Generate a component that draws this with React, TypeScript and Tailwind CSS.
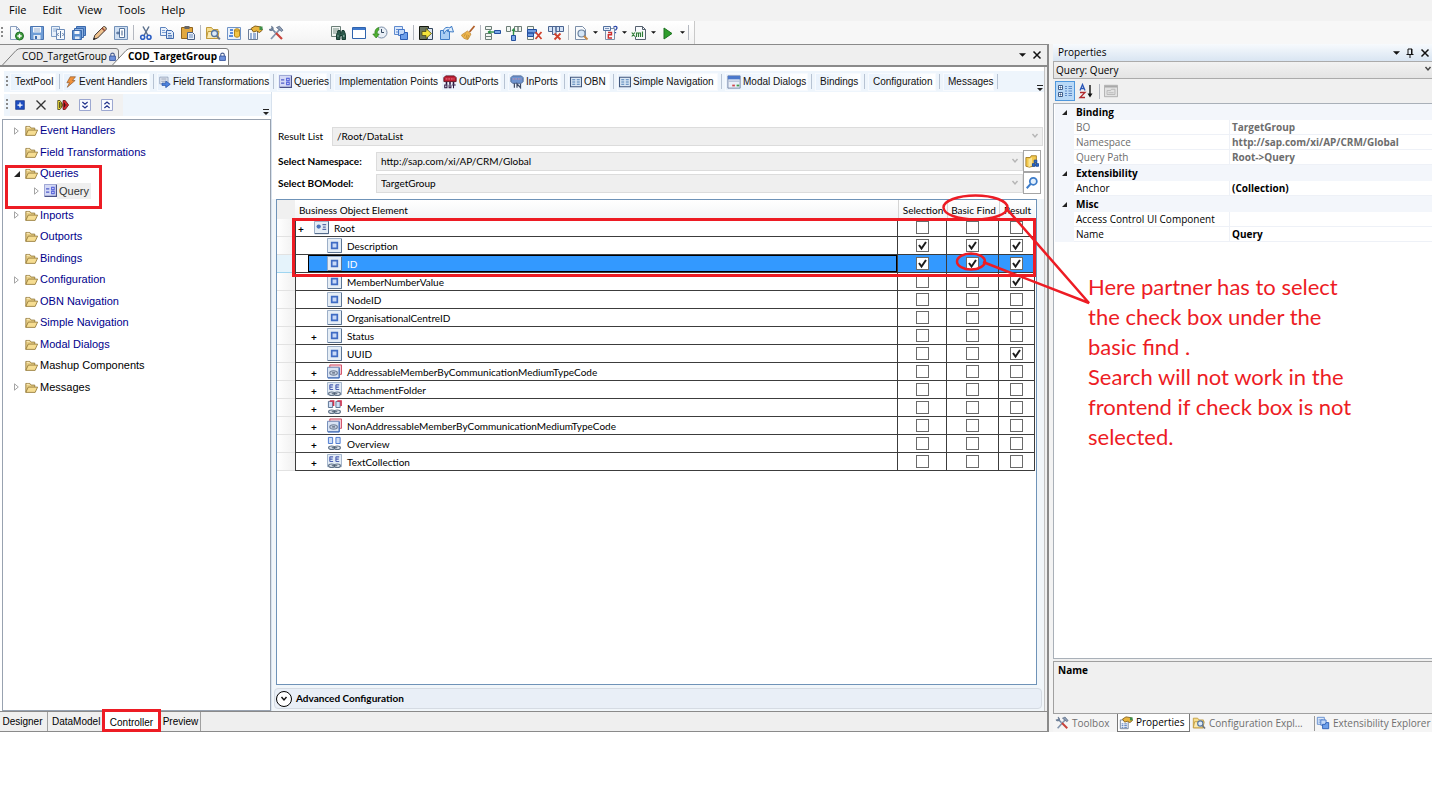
import type { ReactNode } from 'react'

const UI = "font-['Open_Sans','Noto_Sans',sans-serif]"
const LATO = "font-['Lato','Open_Sans',sans-serif]"
const ARIAL = "font-['Liberation_Sans',Arial,sans-serif]"

/* ---------- icons ---------- */

function Icon({ children, className = 'w-4 h-4' }: { children: ReactNode; className?: string }) {
  return (
    <svg viewBox="0 0 16 16" className={`shrink-0 ${className}`} fill="none" aria-hidden="true">
      {children}
    </svg>
  )
}

const NewIcon = () => (
  <Icon>
    <path d="M2.500 1.500h6l3 3v10h-9z" fill="#f6f9fd" stroke="#8b9fbe" />
    <path d="M8.500 1.500v3h3" stroke="#8b9fbe" />
    <circle cx="11.500" cy="11" r="4" fill="#3f9a3c" stroke="#1f6e26" />
    <path d="M11.500 8.800v4.400M9.300 11h4.400" stroke="#fff" strokeWidth="1.400" />
  </Icon>
)
const SaveIcon = () => (
  <Icon>
    <path d="M1.500 1.500h13v13h-13z" fill="#6f9dd6" stroke="#4a74b0" />
    <path d="M4 2h8v5.500H4z" fill="#f3f7fc" />
    <path d="M5 4h6M5 6h6" stroke="#9fb4d2" />
    <path d="M4.500 10h7v4.500h-7z" fill="#e4ebf5" />
    <path d="M6 11h2v3H6z" fill="#3a69ac" />
  </Icon>
)
const SheetsIcon = () => (
  <Icon>
    <path d="M1.500 1.500h8v10h-8z" fill="#e8f0fa" stroke="#7d9cc4" />
    <path d="M3 4h5M3 6h5" stroke="#8faed4" />
    <path d="M6.500 4.500h8v10h-8z" fill="#f5f9fd" stroke="#6b8bb8" />
    <path d="M10.500 6v7M8.500 8l-1 1.500 1 1.500M12.500 8l1 1.500-1 1.500" stroke="#54749f" />
  </Icon>
)
const SaveAllIcon = () => (
  <Icon>
    <path d="M5.500 1.500h9v9h-9z" fill="#6d9bd8" stroke="#3a69ac" />
    <path d="M3.500 3.500h9v9h-9z" fill="#8fb4e4" stroke="#3a69ac" />
    <path d="M1.500 5.500h9v9h-9z" fill="#5b8fd0" stroke="#3a69ac" />
    <path d="M3.500 6h5v3h-5z" fill="#f3f7fc" />
    <path d="M4 11.500h4.500V14H4z" fill="#dfe8f4" />
  </Icon>
)
const PencilIcon = () => (
  <Icon>
    <path d="M1.500 14.500l1.300-4.200L11.500 1.600c1.400-.5 3 1 2.800 2.600L5.600 13z" fill="#efc28d" stroke="#3f3430" />
    <path d="M10 3l3 3" stroke="#9a4a3a" strokeWidth="1.500" />
    <path d="M1.200 15l.8-2.600 1.900 1.700z" fill="#222" />
  </Icon>
)
const FrameIcon = () => (
  <Icon>
    <path d="M1.500 1.500h13v13h-13z" fill="#cfdff2" stroke="#7391b8" />
    <path d="M6.500 3.500h5v9h-5z" fill="#fff" stroke="#54749f" />
    <path d="M9 5.500v5M3 8h4M5 6.500v3" stroke="#3f5f8c" />
  </Icon>
)
const CutIcon = () => (
  <Icon>
    <path d="M5 1.500l5 9M11 1.500l-5 9" stroke="#5a6f8c" strokeWidth="1.500" />
    <circle cx="4.700" cy="12.300" r="2" stroke="#2c5fc4" strokeWidth="1.600" />
    <circle cx="11" cy="12.300" r="2" stroke="#2c5fc4" strokeWidth="1.600" />
  </Icon>
)
const CopyIcon = () => (
  <Icon>
    <path d="M1.500 2.500h5l2 2v6h-7z" fill="#eaf1fb" stroke="#5d83bd" />
    <path d="M3 5.500h3M3 7.500h4" stroke="#7ea2d6" />
    <path d="M7.500 5.500h5l2 2v6h-7z" fill="#dde9f8" stroke="#3f69ac" />
    <path d="M9 8.500h3M9 10.500h4M9 12h4" stroke="#5d83bd" />
  </Icon>
)
const PasteIcon = () => (
  <Icon>
    <path d="M1.500 2.500h11v11h-11z" fill="#e2a83f" stroke="#8f6420" />
    <path d="M4.500 1h5v3h-5z" fill="#666" />
    <path d="M7.500 7.500h5l2 2v5h-7z" fill="#e7effa" stroke="#4a5f82" />
    <path d="M9 10h4M9 12h4" stroke="#6c8cbb" />
  </Icon>
)
const FolderSearchIcon = ({ className }: { className?: string }) => (
  <Icon className={className}>
    <path d="M1.500 13.500v-11h5l1.500 2h5v9z" fill="#f6dd8c" stroke="#c09a3c" />
    <path d="M3 6.500h11l-1.500 7h-11z" fill="#fbeab0" stroke="#c09a3c" />
    <circle cx="9.500" cy="8.500" r="3" fill="#dcebfa" stroke="#55759f" strokeWidth="1.300" />
    <path d="M11.800 10.800l3 3.500" stroke="#6d7682" strokeWidth="2" />
  </Icon>
)
const DbViewIcon = () => (
  <Icon>
    <path d="M1.500 2.500h13v12h-13z" fill="#eaf2fb" stroke="#6f93c6" />
    <path d="M4 5h3M4 8h3M3 11h4" stroke="#2c6bd0" strokeWidth="1.500" />
    <path d="M8.500 5c0-1.600 5-1.600 5 0v6c0 1.600-5 1.600-5 0z" fill="#f3c544" stroke="#b58720" />
    <path d="M8.500 5c0 1.500 5 1.500 5 0" stroke="#b58720" />
  </Icon>
)
const PropsIcon = ({ className }: { className?: string }) => (
  <Icon className={className}>
    <path d="M1.500 4.500h9v10h-9z" fill="#f7f9fc" stroke="#6c7c94" />
    <path d="M3 9h2M3 11h2M3 13h2M6 9h3M6 11h3M6 13h3" stroke="#3f6cb4" />
    <path d="M4 3.500l4-2.500 6 1 1.500 3-3 2.500-3-1.500-3 1z" fill="#e9b53d" stroke="#84601a" />
    <path d="M12.500 1.500h3v3.500h-3z" fill="#3f8f4a" />
  </Icon>
)
const ToolsIcon = ({ className }: { className?: string }) => (
  <Icon className={className}>
    <path d="M4 4l3.500 3.700" stroke="#7488a3" strokeWidth="1.800" />
    <path d="M12 4L3 14" stroke="#8496ae" strokeWidth="1.800" />
    <path d="M8 8l6 6" stroke="#c8433b" strokeWidth="2.200" />
    <path d="M1 4.500c1 1.500 3 1.500 3.800.3C5.800 3.500 5 1.700 3.500 1.300L4 3 2.800 4z" fill="#7488a3" stroke="#54657e" strokeWidth=".7" />
    <path d="M8.500 2.500l3-1.300 3.500 4-1.500 1.300z" fill="#8c9db5" stroke="#4d5d78" strokeWidth=".7" />
  </Icon>
)
const FindIcon = () => (
  <Icon>
    <path d="M1.500 1.500h9v10h-9z" fill="#f2f6f3" stroke="#6b7f78" />
    <path d="M3 4h6M3 6h5M3 8h3" stroke="#7b9188" />
    <path d="M6.500 14.500v-5l1.500-4h2l.5 3h1l.5-3h2l1.500 4v5h-3.500v-4h-2v4z" fill="#2d5a4c" stroke="#173c31" />
    <path d="M7.500 11h1M13 11h1.500" stroke="#bfe0d1" />
  </Icon>
)
const WindowIcon = () => (
  <Icon>
    <path d="M1.500 2.500h13v11h-13z" fill="#fff" stroke="#2f63ad" />
    <path d="M2 3h12v2H2z" fill="#3d78cc" />
  </Icon>
)
const HistoryIcon = () => (
  <Icon>
    <circle cx="9.500" cy="7.500" r="5.500" fill="#e8eef5" stroke="#7b8ea8" />
    <path d="M9.500 4v3.500H12" stroke="#33475f" />
    <path d="M6.500 2.500C3.500 3.500 2.500 6 3 9H.8l3.400 4 3-4H5.300C5 7 5.500 5.500 7 4.700z" fill="#4fb131" stroke="#2e7c1c" strokeWidth=".7" />
  </Icon>
)
const ExtIcon = ({ className }: { className?: string }) => (
  <Icon className={className}>
    <path d="M1.500 1.500h8v8h-8z" fill="#dbe8fa" stroke="#5f8ace" />
    <path d="M3 4.500h5M3 7h3" stroke="#5f8ace" />
    <path d="M5.500 4.500h6v6h-6z" fill="#c3d9f8" stroke="#4677c8" />
    <path d="M7.500 9.500h3l1-2h3v7h-7z" fill="#6d9fea" stroke="#2b5db4" />
  </Icon>
)
const GoIcon = () => (
  <Icon>
    <path d="M1.500 1.500h9v13h-9z" fill="#6a7560" stroke="#14180f" />
    <path d="M9.500 3.500h5v11h-5z" fill="#dfe6ee" stroke="#33475f" />
    <path d="M4 6.500h4v-3l5.500 5-5.500 5v-3H4z" fill="#f4e43c" stroke="#4d4a10" strokeWidth=".8" />
  </Icon>
)
const ShareIcon = () => (
  <Icon>
    <path d="M1.500 5.500h9v9h-9z" fill="#a9cdf3" stroke="#3f7cc6" />
    <path d="M5 9c-2-5 2-8 6-6l1.500-2 2 6-6-.5L10 4.800C8 4.300 6 6 5 9z" fill="#e1effc" stroke="#3f7cc6" />
  </Icon>
)
const BroomIcon = () => (
  <Icon>
    <path d="M14.500 1l-5 6" stroke="#b0602a" strokeWidth="1.800" />
    <path d="M7.500 6l3.500 3-3 5.500c-3-.3-5.500-1.500-6.500-4.500z" fill="#efb64c" stroke="#c08c38" strokeWidth=".8" />
    <path d="M5.500 8.500L4 11.500M7 9.500l-1 4M8.500 10l-1 4" stroke="#c9953a" />
  </Icon>
)
const RowAddIcon = () => (
  <Icon>
    <path d="M.5 1.500h6v3h-6zM.5 8.500h6v3h-6zM.5 11.500h6v3h-6z" fill="#f2f6f2" stroke="#6c7d77" />
    <path d="M9.500 5.500h6v3h-6z" fill="#7aa6e6" stroke="#234f9e" />
    <path d="M9 7H3" stroke="#2f9148" strokeWidth="1.400" />
    <path d="M5.500 4.800L2.500 7l3 2.200z" fill="#2f9148" />
  </Icon>
)
const ColAddIcon = () => (
  <Icon>
    <path d="M.5 1.500h4v5h-4zM8.500 1.500H12v5H8.500zM12 1.500h3.500v5H12z" fill="#f2f6f2" stroke="#6c7d77" />
    <path d="M5.500 10.500h4v5h-4z" fill="#7aa6e6" stroke="#234f9e" />
    <path d="M7.500 10V4" stroke="#2f9148" strokeWidth="1.400" />
    <path d="M5.500 6l2-3 2 3z" fill="#2f9148" />
  </Icon>
)
const RowDelIcon = () => (
  <Icon>
    <path d="M.5 1.500h6v3h-6zM.5 11.500h6v3h-6z" fill="#f2f6f2" stroke="#6c7d77" />
    <path d="M.5 4.500h9v3.500h-9zM.5 8h6v3.500h-6z" fill="#6d9be0" stroke="#234f9e" />
    <path d="M8.500 7l6 7M14.500 7l-6 7" stroke="#d0412c" strokeWidth="1.800" />
  </Icon>
)
const ColDelIcon = () => (
  <Icon>
    <path d="M.5 1.500h4v5h-4zM4.500 1.500H8v8H4.500zM8 1.500h3.500v5H8zM11.500 1.500h4v5h-4z" fill="#d5e3f6" stroke="#4a6491" />
    <path d="M6.500 8.500l6 6M12.500 8.500l-6 6" stroke="#d0412c" strokeWidth="1.800" />
  </Icon>
)
const PreviewIcon = () => (
  <Icon>
    <path d="M2.500 1.500h7l3 3v10h-10z" fill="#f8fafc" stroke="#7b8ea8" />
    <circle cx="8.500" cy="8.500" r="3.500" fill="#d5e6f6" stroke="#6c839f" strokeWidth="1.200" />
    <path d="M11 11l3.500 3.500" stroke="#c78945" strokeWidth="2" />
  </Icon>
)
const HelpDocIcon = () => (
  <Icon>
    <path d="M3.500 3.500h9v11h-9z" fill="#f6f8fb" stroke="#7b8ea8" />
    <path d="M1.500 1.500h7v4h-7z" fill="#e6edf8" stroke="#52719f" />
    <path d="M3 3.500h4" stroke="#7b93bb" />
    <path d="M6 7.500h3.500v2.300H6.300v3.200H10" stroke="#cf2f2f" strokeWidth="1.400" />
    <path d="M11.500 2.500c.5-1.500 3.500-1.500 3.500.3 0 1.400-1.500 1.300-1.500 2.700M13.500 7v1.300" stroke="#2b46a8" strokeWidth="1.300" />
  </Icon>
)
const XmlIcon = () => (
  <Icon>
    <path d="M4.500 1.500h7l3 3v10h-10z" fill="#f8fafc" stroke="#55606e" />
    <path d="M11.500 1.500v3h3" stroke="#55606e" />
    <path d="M.5 6.500h12v5H.5z" fill="#f2f8f2" />
    <path d="M.8 7.500l3 4M3.800 7.500l-3 4M5.500 12V8h4v4M7.500 8v4M11.500 6.500V12" stroke="#2d7a36" strokeWidth="1.100" />
  </Icon>
)
const RunIcon = () => (
  <Icon>
    <path d="M4 3v11l8-5.500z" fill="#2f9d2c" stroke="#1d7320" />
  </Icon>
)
const BoltIcon = () => (
  <Icon className="w-3 h-3">
    <path d="M7 1h7l-4 5h3.500L3 15l3-6H2.500z" fill="#f0913a" stroke="#7e4a20" strokeWidth=".8" />
  </Icon>
)
const FieldIcon = () => (
  <Icon className="w-3 h-3">
    <path d="M1 1.500h11v9H1z" fill="#e7ecf4" stroke="#8797b2" />
    <path d="M3 4h7M3 7h5" stroke="#7c8aa3" />
    <path d="M4 9.500h5v-3l6 4.500-6 4.500v-3H4z" fill="#4d84e0" stroke="#234fa3" />
  </Icon>
)
const QueryIcon = () => (
  <Icon className="w-[13px] h-[13px]">
    <path d="M.5.500h15v15H.5z" fill="#d5daf6" stroke="#8a93c8" />
    <path d="M15.300 1v14.300H1" stroke="#4a5288" strokeWidth="1.400" />
    <path d="M2.500 6h4M2.500 10h4" stroke="#4f5cc8" strokeWidth="1.500" />
    <path d="M9.500 4h3v3h-3zM9.500 9h3v3h-3z" fill="#eef0ff" stroke="#4453d6" strokeWidth="1.300" />
  </Icon>
)
const OutPortIcon = () => (
  <Icon className="w-3.5 h-3.5">
    <path d="M1 3l2-2h10l2 2v4.500H1z" fill="#c01f36" stroke="#5a0d18" />
    <path d="M3 4.500h10" stroke="#f08a95" strokeDasharray="2 1" />
    <path d="M4 8v3M8 8v3M12 8v3" stroke="#2a1440" strokeWidth="1.800" />
    <path d="M2 11.500h2.500v3H2zM7 11v4M6.500 14.500H9V11M12 11v4M10.500 11.500h4" stroke="#2a1440" strokeWidth="1.200" />
  </Icon>
)
const InPortIcon = () => (
  <Icon className="w-3.5 h-3.5">
    <path d="M1 3l2-2h10l2 2v4.500l-2 2H3L1 7.500z" fill="#6c93cf" stroke="#44608f" />
    <path d="M3 4.500h10" stroke="#dc8fa0" strokeDasharray="2 1" />
    <path d="M5 9.500v5M8 14.500v-4.500l4 4.500v-4.500" stroke="#3c4a66" strokeWidth="1.400" />
  </Icon>
)
const ObnIcon = () => (
  <Icon className="w-3 h-3">
    <path d="M.7 1.700h14.600v12.600H.7z" fill="#dbe8f5" stroke="#41577d" strokeWidth="1.400" />
    <path d="M3 5h4M3 8h4M3 11h4M9 5h4M9 8h4M9 11h4" stroke="#4f7fb6" strokeWidth="1.600" />
  </Icon>
)
const ModalIcon = () => (
  <Icon className="w-3.5 h-3.5">
    <path d="M1 1h14v14H1z" fill="#e9eff8" stroke="#6d7ea0" />
    <path d="M1 1h14v4H1z" fill="#4b78cb" />
    <path d="M2 7h12" stroke="#96a7c6" />
    <path d="M6 11h3v2H6z" fill="#d0434a" />
    <path d="M11 11h3v2h-3z" fill="#3e9a4c" />
  </Icon>
)
const FolderIcon = () => (
  <Icon className="w-[13px] h-[13px]">
    <path d="M1 14V3h5l1.500 2H12v3" fill="#e9cf86" stroke="#8f7434" />
    <path d="M1 14L4 7.500h11.500L12.500 14z" fill="#f6dd92" stroke="#8f7434" />
    <path d="M2 4h3.500" stroke="#fff7d8" />
  </Icon>
)
const AttrIcon = () => (
  <Icon className="w-[15px] h-[15px]">
    <path d="M.5.500h15v15H.5z" fill="#e6eef6" stroke="#93a8c2" />
    <path d="M15.500 1v14.500H1" stroke="#57708f" />
    <path d="M5 5h6v6H5z" fill="#c8d9f8" stroke="#3f6cc4" strokeWidth="1.800" />
  </Icon>
)
const NodeIcon = () => (
  <Icon className="w-[15px] h-[15px]">
    <path d="M.5 1.500h15v13H.5z" fill="#e6eef6" stroke="#93a8c2" />
    <path d="M15.500 1.500v13H1" stroke="#475f80" />
    <circle cx="5" cy="7" r="2.300" fill="#4a74bb" />
    <path d="M9 5h4M9.500 7.500h3M9 10h4" stroke="#5a6da8" strokeWidth="1.400" />
  </Icon>
)
const TypeCodeIcon = () => (
  <Icon className="w-[15px] h-[15px]">
    <path d="M3 1h12.500v10H3z" fill="#f6ccd4" stroke="#d0485f" />
    <path d="M.5 3.500h12.500v11H.5z" fill="#d9e4f4" stroke="#6d86b4" />
    <path d="M13 4v11H1" stroke="#2f62bb" />
    <ellipse cx="7" cy="9.500" rx="4" ry="2.300" fill="#c3cede" stroke="#74839a" strokeWidth="1.300" />
    <path d="M5.500 9.500h3" stroke="#34435c" />
  </Icon>
)
const LinkPairIcon = ({ boxed = false, red = false }: { boxed?: boolean; red?: boolean }) => (
  <Icon className="w-[15px] h-[15px]">
    {boxed && <path d="M.5.500h15v13H.5z" fill="#e3ecf6" stroke="#9fb1c8" />}
    {boxed ? (
      <path d="M3 3h3.500M3 5.500h3M3 8h3.500M3 3v5M9.500 3H13M9.500 5.500h3M9.500 8H13M9.500 3v5" stroke="#4c60b2" strokeWidth="1.200" />
    ) : (
      <path d="M1.500 1.500H6V8H1.500zM9.500 1.500H14V8H9.500z" fill="#cfdff6" stroke={red ? '#57708f' : '#4a78cf'} />
    )}
    {red && <path d="M3 1h4v5.500M11 1h4v5.500" stroke="#d0324f" strokeWidth="1.700" />}
    <ellipse cx="5" cy="12.500" rx="3.300" ry="1.900" fill="#dce4ed" stroke="#5f7187" strokeWidth="1.200" />
    <ellipse cx="11" cy="12.500" rx="3.300" ry="1.900" fill="#dce4ed" stroke="#5f7187" strokeWidth="1.200" />
    <path d="M5 12.500h6" stroke="#46566c" />
  </Icon>
)
const LockIcon = () => (
  <svg viewBox="0 0 8 10" className="w-[7px] h-[9px] shrink-0" fill="none" aria-hidden="true">
    <path d="M2 5V3c0-2.500 4-2.500 4 0v2" stroke="#4a5f92" strokeWidth="1.200" />
    <path d="M.7 4.500h6.600v5H.7z" fill="#6f92dc" stroke="#33529a" />
  </svg>
)
const Caret = ({ className = 'w-[7px] h-1' }: { className?: string }) => (
  <svg viewBox="0 0 8 4" className={`shrink-0 ${className}`} aria-hidden="true">
    <path d="M0 0h8L4 4z" fill="#111" />
  </svg>
)
const Chevron = ({ color = '#b5b5b5' }: { color?: string }) => (
  <svg viewBox="0 0 8 6" className="w-2 h-1.5" fill="none" aria-hidden="true">
    <path d="M1.500 1L4 4l2.500-3" stroke={color} strokeWidth="1.400" />
  </svg>
)
const CrossIcon = () => (
  <svg viewBox="0 0 10 10" className="w-2.5 h-2.5" fill="none" aria-hidden="true">
    <path d="M1.500 1.500l7 7M8.500 1.500l-7 7" stroke="#111" strokeWidth="1.500" />
  </svg>
)
const OverflowIcon = () => (
  <svg viewBox="0 0 6 6" className="w-1.5 h-1.5" aria-hidden="true">
    <path d="M0 0h6v1H0zM0 3h6L3 6z" fill="#222" />
  </svg>
)
const ClosedIcon = () => (
  <svg viewBox="0 0 5 8" className="w-[5px] h-2" fill="none" aria-hidden="true">
    <path d="M.5.8v6.400L4.300 4z" stroke="#a5a5a5" />
  </svg>
)
const OpenIcon = () => (
  <svg viewBox="0 0 7 7" className="w-1.5 h-1.5" aria-hidden="true">
    <path d="M7 0v7H0z" fill="#222" />
  </svg>
)

function Grip() {
  return (
    <svg viewBox="0 0 2 14" className="w-0.5 h-3.5 shrink-0" aria-hidden="true">
      <path d="M1 1v12" stroke="#8a8a8a" strokeWidth="2" strokeDasharray="2 2" />
    </svg>
  )
}

function Sep() {
  return <span className="w-1 shrink-0 flex justify-center"><span className="w-px h-[15px] bg-[#b4b8c0]" /></span>
}

/* ---------- data ---------- */

type Tool = { label: string; icon: () => ReactNode; menu?: boolean }

const toolGroups: Tool[][] = [
  [
    { label: 'New', icon: NewIcon },
    { label: 'Save', icon: SaveIcon },
    { label: 'Save as', icon: SheetsIcon },
    { label: 'Save all', icon: SaveAllIcon },
    { label: 'Edit', icon: PencilIcon },
    { label: 'Fit', icon: FrameIcon },
  ],
  [
    { label: 'Cut', icon: CutIcon },
    { label: 'Copy', icon: CopyIcon },
    { label: 'Paste', icon: PasteIcon },
  ],
  [
    { label: 'Configuration Explorer', icon: FolderSearchIcon },
    { label: 'Data', icon: DbViewIcon },
    { label: 'Properties', icon: PropsIcon },
    { label: 'Toolbox', icon: ToolsIcon },
  ],
]

const toolGroupsRight: Tool[][] = [
  [
    { label: 'Find', icon: FindIcon },
    { label: 'Window', icon: WindowIcon },
    { label: 'History', icon: HistoryIcon },
    { label: 'Extensibility', icon: ExtIcon },
  ],
  [
    { label: 'Activate', icon: GoIcon },
    { label: 'Share', icon: ShareIcon },
    { label: 'Clean', icon: BroomIcon },
  ],
  [
    { label: 'Insert row', icon: RowAddIcon },
    { label: 'Insert column', icon: ColAddIcon },
    { label: 'Delete row', icon: RowDelIcon },
    { label: 'Delete column', icon: ColDelIcon },
  ],
  [
    { label: 'Preview', icon: PreviewIcon, menu: true },
    { label: 'Help', icon: HelpDocIcon, menu: true },
    { label: 'XML', icon: XmlIcon, menu: true },
    { label: 'Run', icon: RunIcon, menu: true },
  ],
]

const sections: { label: string; width: string; icon?: ReactNode; noSep?: boolean }[] = [
  { label: 'TextPool', width: 'w-[46px]' },
  { label: 'Event Handlers', width: 'w-[87px]', icon: <BoltIcon /> },
  { label: 'Field Transformations', width: 'w-[113px]', icon: <FieldIcon /> },
  { label: 'Queries', width: 'w-[50px]', icon: <QueryIcon /> },
  { label: 'Implementation Points', width: 'w-[107px]', noSep: true },
  { label: 'OutPorts', width: 'w-[60px]', icon: <OutPortIcon /> },
  { label: 'InPorts', width: 'w-[53px]', icon: <InPortIcon /> },
  { label: 'OBN', width: 'w-[42px]', icon: <ObnIcon /> },
  { label: 'Simple Navigation', width: 'w-[101px]', icon: <ObnIcon /> },
  { label: 'Modal Dialogs', width: 'w-[83px]', icon: <ModalIcon /> },
  { label: 'Bindings', width: 'w-[46px]' },
  { label: 'Configuration', width: 'w-[68px]' },
  { label: 'Messages', width: 'w-[51px]' },
]

const folders: { label: string; closed?: boolean; dark?: boolean; child?: string }[] = [
  { label: 'Event Handlers', closed: true },
  { label: 'Field Transformations' },
  { label: 'Queries', child: 'Query' },
  { label: 'Inports', closed: true },
  { label: 'Outports' },
  { label: 'Bindings' },
  { label: 'Configuration', closed: true },
  { label: 'OBN Navigation' },
  { label: 'Simple Navigation' },
  { label: 'Modal Dialogs' },
  { label: 'Mashup Components', dark: true },
  { label: 'Messages', closed: true, dark: true },
]

const elements: { name: string; icon: ReactNode; plus?: boolean; root?: boolean; selected?: boolean; checks: number[] }[] = [
  { name: 'Root', icon: <NodeIcon />, plus: true, root: true, checks: [0, 0, 0] },
  { name: 'Description', icon: <AttrIcon />, checks: [1, 1, 1] },
  { name: 'ID', icon: <AttrIcon />, selected: true, checks: [1, 1, 1] },
  { name: 'MemberNumberValue', icon: <AttrIcon />, checks: [0, 0, 1] },
  { name: 'NodeID', icon: <AttrIcon />, checks: [0, 0, 0] },
  { name: 'OrganisationalCentreID', icon: <AttrIcon />, checks: [0, 0, 0] },
  { name: 'Status', icon: <AttrIcon />, plus: true, checks: [0, 0, 0] },
  { name: 'UUID', icon: <AttrIcon />, checks: [0, 0, 1] },
  { name: 'AddressableMemberByCommunicationMediumTypeCode', icon: <TypeCodeIcon />, plus: true, checks: [0, 0, 0] },
  { name: 'AttachmentFolder', icon: <LinkPairIcon boxed />, plus: true, checks: [0, 0, 0] },
  { name: 'Member', icon: <LinkPairIcon red />, plus: true, checks: [0, 0, 0] },
  { name: 'NonAddressableMemberByCommunicationMediumTypeCode', icon: <TypeCodeIcon />, plus: true, checks: [0, 0, 0] },
  { name: 'Overview', icon: <LinkPairIcon />, plus: true, checks: [0, 0, 0] },
  { name: 'TextCollection', icon: <LinkPairIcon boxed />, plus: true, checks: [0, 0, 0] },
]

const columns = ['Selection', 'Basic Find', 'Result']

const properties = [
  {
    name: 'Binding',
    muted: true,
    rows: [
      ['BO', 'TargetGroup'],
      ['Namespace', 'http://sap.com/xi/AP/CRM/Global'],
      ['Query Path', 'Root->Query'],
    ],
  },
  { name: 'Extensibility', rows: [['Anchor', '(Collection)']] },
  { name: 'Misc', rows: [['Access Control UI Component', ''], ['Name', 'Query']] },
]

/* ---------- header ---------- */

function ToolGroup({ tools }: { tools: Tool[] }) {
  return (
    <>
      {tools.map(({ label, icon: Glyph, menu }) => (
        <span key={label} className="flex items-center">
          <button type="button" aria-label={label} className="w-[21px] h-5 flex items-center justify-center">
            <Glyph />
          </button>
          {menu && (
            <button type="button" aria-label={`${label} options`} className="w-2 h-5 flex items-center justify-center">
              <Caret className="w-[5px] h-[3px]" />
            </button>
          )}
        </span>
      ))}
      <Sep />
    </>
  )
}

function Header() {
  return (
    <header>
      <nav className={`h-[21px] bg-[#f2f2f2] flex items-center gap-4 pl-[9px] text-[11px] text-black ${UI}`}>
        {['File', 'Edit', 'View', 'Tools', 'Help'].map((m) => (
          <button key={m} type="button">{m}</button>
        ))}
      </nav>
      <div className="h-[23px] bg-[#f7f7f7] flex">
        <div className="flex items-center pl-px pr-1 bg-gradient-to-b from-white to-[#f3f3f3] border-r border-[#c9c9c9]">
          <Grip />
          <span className="w-0.5" />
          {toolGroups.map((g, i) => (
            <span key={g[0].label} className="flex items-center">
              {i < 2 ? <ToolGroup tools={g} /> : g.map(({ label, icon: Glyph }) => (
                <button key={label} type="button" aria-label={label} className="w-[21px] h-5 flex items-center justify-center">
                  <Glyph />
                </button>
              ))}
            </span>
          ))}
          <span className="w-[41px]" />
          {toolGroupsRight.map((g) => <ToolGroup key={g[0].label} tools={g} />)}
        </div>
      </div>
    </header>
  )
}

function DocTab({ active }: { active?: boolean }) {
  return (
    <button
      type="button"
      className={`relative w-[117px] h-[17px] flex items-center justify-end gap-0.5 pr-[3px] text-[10px] text-black ${UI} ${
        active ? '-ml-[7px] z-10 font-bold' : ''
      }`}
    >
      <svg viewBox="0 0 117 17" preserveAspectRatio="none" className="absolute inset-0 w-full h-full" aria-hidden="true">
        <path d="M.5 17L14 2.500Q16 .5 19 .5h95q2.500 0 2.500 2.500v14" fill={active ? '#ffffff' : '#ebebeb'} stroke="#7c7c7c" />
      </svg>
      <span className="relative">COD_TargetGroup</span>
      <span className="relative"><LockIcon /></span>
    </button>
  )
}

/* ---------- left column ---------- */

function Tree() {
  return (
    <ul className={`flex-1 border border-[#98a2b0] bg-white text-[11px] text-[#00008b] ${ARIAL}`}>
      {folders.map((n) => (
        <li key={n.label} className="group relative">
          <div className="flex items-center pl-[11px] h-[21px] group-even:h-[22px]">
            <span className="w-[11px] flex">
              {n.closed && <ClosedIcon />}
              {n.child && <OpenIcon />}
            </span>
            <FolderIcon />
            <span className={`ml-0.5 ${n.dark ? 'text-black' : ''}`}>{n.label}</span>
          </div>
          {n.child && (
            <>
              <div className="flex items-center h-[13px] mb-[7px] pl-[31px] text-[#333]">
                <span className="w-[10px]"><ClosedIcon /></span>
                <QueryIcon />
                <span className="px-0.5 leading-4 bg-[#efefef]">{n.child}</span>
              </div>
              <div className="absolute left-0.5 top-0.5 w-[97px] h-11 border-[3px] border-[#ed1c24] pointer-events-none" />
            </>
          )}
        </li>
      ))}
    </ul>
  )
}

/* ---------- query editor ---------- */

function Field({ id, label, value, bold, children }: { id: string; label: string; value: string; bold?: boolean; children?: ReactNode }) {
  return (
    <div className="flex items-center h-[22px]">
      <label htmlFor={id} className={`shrink-0 ${bold ? 'w-[98px] font-bold' : 'w-[54px]'}`}>{label}</label>
      <span className="relative flex-1 flex">
        <select id={id} className="appearance-none w-full h-[19px] pl-1 bg-[#efefef] border border-[#dcdcdc] text-black">
          <option>{value}</option>
        </select>
        <span className="absolute right-1 top-[6px] pointer-events-none"><Chevron /></span>
      </span>
      {children}
    </div>
  )
}

function Check({ label, on }: { label: string; on: boolean }) {
  return (
    <span className="relative block w-[13px] h-[13px] mx-auto">
      <input
        type="checkbox"
        aria-label={label}
        defaultChecked={on}
        className="peer appearance-none block w-[13px] h-[13px] bg-white border border-[#6a6a6a]"
      />
      <svg viewBox="0 0 13 13" className="hidden peer-checked:block absolute inset-0 pointer-events-none" fill="none">
        <path d="M3 6l2.500 3.500L10 3" stroke="#1c1c1c" strokeWidth="2" />
      </svg>
    </span>
  )
}

function ElementTable() {
  return (
    <div className="relative flex-1 bg-white border border-[#6f93b8] pr-px">
      <table className="w-full table-fixed border-separate border-spacing-0 text-[10px] leading-3 text-black">
        <colgroup>
          <col className="w-[18px]" />
          <col />
          <col className="w-[49px]" />
          <col className="w-[52px]" />
          <col className="w-[36px]" />
        </colgroup>
        <thead>
          <tr className="h-[19px] bg-gradient-to-b from-white to-[#f3f4f6]">
            <td className="p-0 bg-[#f0f0f0]" />
            <th className="p-0 pl-1 text-left font-normal">Business Object Element</th>
            {columns.map((c) => (
              <th key={c} className="p-0 font-normal border-l border-[#d5d5d5] whitespace-nowrap">{c}</th>
            ))}
          </tr>
        </thead>
        <tbody>
          {elements.map((e) => (
            <tr key={e.name} className="h-[18px]">
              <td className={`p-0 border-b ${e.selected ? 'bg-[#e5f3fb] border-[#9fd5f0]' : 'bg-gradient-to-r from-white to-[#f0f0f0] border-[#e2e2e2]'}`} />
              <td className="p-0 border-l border-b border-r border-[#3c3c3c]">
                <div className="flex h-[17px]">
                  <span className="shrink-0 w-3 pt-0.5 flex items-center font-bold">
                    <span className="pl-0.5">{e.root && '+'}</span>
                  </span>
                  <div className={`flex-1 flex items-center ${e.selected ? 'bg-[#3399ff] text-white border border-black' : ''}`}>
                    {!e.root && (
                      <span className={`shrink-0 pt-0.5 pl-[3px] font-bold w-[13px] ${e.selected ? '-ml-px' : ''}`}>
                        {e.plus && '+'}
                      </span>
                    )}
                    <span className="shrink-0 flex w-[26px] pl-[6px]">{e.icon}</span>
                    <span className="whitespace-nowrap">{e.name}</span>
                  </div>
                </div>
              </td>
              {columns.map((c, i) => (
                <td key={c} className={`p-0 border-b border-r border-[#3c3c3c] ${e.selected ? 'bg-[#3399ff]' : ''}`}>
                  <Check label={`${e.name} ${c}`} on={e.checks[i] === 1} />
                </td>
              ))}
            </tr>
          ))}
        </tbody>
      </table>
      <div className="absolute left-[15px] right-0 top-[18px] h-[59px] border-[3px] border-[#ed1c24] pointer-events-none" />
    </div>
  )
}

function Editor() {
  return (
    <section className={`flex-1 flex flex-col bg-[#f1f6fa] text-[10px] text-black ${LATO}`}>
      <div className="bg-white pt-[33px] pb-[5px] pl-1.5 pr-px">
        <Field id="result" label="Result List" value="/Root/DataList" />
        <div className="pt-[3px] pr-0.5">
          <Field id="ns" label="Select Namespace:" value="http://sap.com/xi/AP/CRM/Global" bold>
            <button type="button" aria-label="Open namespace" className="w-[18px] h-[22px] bg-white border border-[#a5a5a5] flex items-center justify-center">
              <Icon className="w-3.5 h-3.5">
                <path d="M1 4h5l1-2h6v11l-8 2-4-1z" fill="#f3c94d" stroke="#a57a1e" />
                <path d="M4 6l4-2v9l-4 2z" fill="#fbe595" />
                <path d="M10.500 7h3v3h-3zM8.500 11h3v3h-3zM12.500 11h3v3h-3z" fill="#2d6fd2" stroke="#17479a" />
              </Icon>
            </button>
          </Field>
          <Field id="bo" label="Select BOModel:" value="TargetGroup" bold>
            <button type="button" aria-label="Search model" className="w-[18px] h-[22px] bg-white border border-[#a5a5a5] flex items-center justify-center">
              <Icon className="w-3.5 h-3.5">
                <circle cx="9.500" cy="6" r="4" fill="#e3f0fd" stroke="#3d7cc9" strokeWidth="2" />
                <path d="M6.500 9L2 14" stroke="#3d7cc9" strokeWidth="2.400" />
              </Icon>
            </button>
          </Field>
        </div>
      </div>
      <div className="flex-1 flex flex-col pl-1 pr-[7px]">
        <ElementTable />
      </div>
      <div className="pt-[3px] pb-0.5 px-0.5">
        <button type="button" className="w-full h-[21px] flex items-center gap-1 pl-px rounded-sm bg-[#e9eff7] border border-[#d5dbe3] font-bold">
          <span className="w-4 h-4 rounded-full border border-black bg-white flex items-center justify-center"><Chevron color="#111" /></span>
          Advanced Configuration
        </button>
      </div>
    </section>
  )
}

/* ---------- properties ---------- */

function PropertyGrid() {
  return (
    <table className="w-full table-fixed border-separate border-spacing-0 text-[10px] leading-3">
      <colgroup>
        <col className="w-[19px]" />
        <col className="w-[156px]" />
        <col />
      </colgroup>
      {properties.map((g) => (
        <tbody key={g.name}>
          <tr className="h-4 bg-[#f3f6fb]">
            <td className="p-0">
              <svg viewBox="0 0 7 7" className="w-[5px] h-[5px] ml-[7px]"><path d="M7 0v7H0z" fill="#222" /></svg>
            </td>
            <th colSpan={2} className="p-0 pl-0.5 text-left font-bold text-black">{g.name}</th>
          </tr>
          {g.rows.map(([k, v]) => (
            <tr key={k} className={`h-[15px] ${g.muted ? 'text-[#6d6d6d]' : 'text-black'}`}>
              <td className="p-0 bg-[#f3f6fb]" />
              <th className="p-0 pl-0.5 text-left font-normal border-b border-r border-[#eef1f7] whitespace-nowrap">{k}</th>
              <td className="p-0 pl-0.5 font-bold border-b border-[#eef1f7] whitespace-nowrap">{v}</td>
            </tr>
          ))}
        </tbody>
      ))}
    </table>
  )
}

function Callout() {
  return (
    <div className="absolute left-0 top-0 z-20 text-[#ed1c24] pointer-events-none">
      <svg viewBox="0 0 160 120" className="absolute -left-[113px] top-[146px] w-[160px] h-[120px] max-w-none" fill="none" aria-hidden="true">
        <ellipse cx="35.500" cy="17.500" rx="32" ry="12" stroke="#ed1c24" strokeWidth="2.500" />
        <ellipse cx="31" cy="71.500" rx="14" ry="8" stroke="#ed1c24" strokeWidth="2.500" />
        <path d="M66 18l83 95L43 72" stroke="#ed1c24" strokeWidth="2.500" />
      </svg>
      <p className={`absolute left-[35px] top-[228px] w-[300px] text-[22px] leading-[30px] ${LATO}`}>
        Here partner has to select
        <br />
        the check box under the
        <br />
        basic find .
        <br />
        Search will not work in the
        <br />
        frontend if check box is not
        <br />
        selected.
      </p>
    </div>
  )
}

function PropertiesPane() {
  return (
    <aside className={`relative w-[379px] shrink-0 flex flex-col bg-[#f0f0f0] text-[10px] text-black ${UI}`}>
      <div className="h-[17px] flex items-center pl-[5px] pr-0.5 bg-gradient-to-b from-[#f7fafd] to-[#d9e5f2]">
        <h2 className="flex-1">Properties</h2>
        <button type="button" aria-label="Pane menu" className="mr-1.5"><Caret /></button>
        <button type="button" aria-label="Pin" className="mr-1.5">
          <svg viewBox="0 0 8 10" className="w-2 h-2.5" fill="none"><path d="M2 6V1h4v5M.5 6.500h7M4 6.500V10M5.500 1v5" stroke="#111" /></svg>
        </button>
        <button type="button" aria-label="Close pane"><CrossIcon /></button>
      </div>
      <div className="relative">
        <select aria-label="Object" className="block appearance-none w-full h-[18px] pl-0.5 bg-gradient-to-b from-[#f2f2f2] to-[#e4e4e4] border border-r-0 border-[#ababab]">
          <option>Query: Query</option>
        </select>
        <span className="absolute right-0 top-[5px] pointer-events-none"><Chevron color="#444" /></span>
      </div>
      <div className="h-6 flex items-center pl-0.5">
        <button type="button" aria-label="Categorized" className="w-5 h-5 bg-[#b9d9f7] border border-[#4f97dc] flex items-center justify-center">
          <Icon>
            <path d="M1.500 2.500h4v4h-4zM1.500 9.500h4v4h-4z" fill="#fff" stroke="#3f5f8c" />
            <path d="M2.500 4.500h2M3.500 3.500v2M2.500 11.500h2M3.500 10.500v2" stroke="#3f5f8c" />
            <path d="M8 3.500h2M8 5.500h2M8 10.500h2M8 12.500h2M11.500 3.500H15M11.500 5.500H15M11.500 10.500H15M11.500 12.500H15M8 8h2M11.500 8H15" stroke="#5f8ac6" />
          </Icon>
        </button>
        <button type="button" aria-label="Alphabetical" className="w-[22px] h-5 flex items-center justify-center">
          <Icon>
            <path d="M2 7.500L4.500 1.500 7 7.500M3 5.500h3" stroke="#2b57b8" strokeWidth="1.300" />
            <path d="M2 9.500h5l-5 5h5" stroke="#b0282c" strokeWidth="1.300" />
            <path d="M12 2v9" stroke="#111" strokeWidth="1.400" />
            <path d="M9.500 10.500h5L12 14.500z" fill="#111" />
          </Icon>
        </button>
        <Sep />
        <button type="button" aria-label="Property pages" className="w-5 h-5 flex items-center justify-center">
          <Icon className="w-3.5 h-3.5">
            <path d="M.5 1.500h15v13H.5z" fill="#e2e2e2" stroke="#a9a9a9" />
            <path d="M1 3h14" stroke="#a9a9a9" strokeWidth="2" />
            <path d="M3.500 7.500h4l1-1.500h4v6h-9zM5 10h6" stroke="#b5b5b5" />
          </Icon>
        </button>
      </div>
      <div className="flex-1 bg-white border border-r-0 border-[#a9b0b8] pl-px">
        <PropertyGrid />
      </div>
      <div className="h-[53px] mt-0.5 pl-1 leading-4 font-bold border border-r-0 border-[#a0a0a0] bg-[#f0f0f0]">Name</div>
      <div className="h-[18px] flex items-center bg-[#f5f5f5] text-[#6f6f6f] whitespace-nowrap overflow-hidden">
        <button type="button" className="flex items-center gap-[3px] w-[64px] pl-0.5"><ToolsIcon className="w-3.5 h-3.5" />Toolbox</button>
        <button type="button" className="flex items-center gap-[3px] w-[73px] h-[18px] pl-px bg-white text-black border border-t-0 border-[#777]">
          <PropsIcon className="w-3.5 h-3.5" />Properties
        </button>
        <button type="button" className="flex items-center gap-[3px] w-[124px] pl-0.5"><FolderSearchIcon className="w-3.5 h-3.5" />Configuration Expl...</button>
        <button type="button" className="flex items-center gap-[3px] pl-px border-l border-[#999]"><ExtIcon className="w-3.5 h-3.5" />Extensibility Explorer</button>
      </div>
      <Callout />
    </aside>
  )
}

/* ---------- page ---------- */

export default function App() {
  return (
    <div className="min-h-screen flex flex-col bg-white pr-2 pb-[78px] overflow-x-hidden">
      <Header />
      <div className="flex-1 flex bg-[#f3f3f3]">
        <main className="flex-1 min-w-0 flex flex-col border-t border-r-2 border-[#8a8a8a] bg-[#efefef]">
          <div className="h-[22px] flex items-end border-b-2 border-[#8a8a8a]">
            <div className="flex-1 flex pl-0.5">
              <DocTab />
              <DocTab active />
            </div>
            <div className="self-center flex items-center gap-1.5 pr-[5px]">
              <button type="button" aria-label="Open documents"><Caret /></button>
              <button type="button" aria-label="Close document"><CrossIcon /></button>
            </div>
          </div>
          <div className="flex-1 flex flex-col bg-white border-r border-[#c3c3c3] mr-0.5">
            <nav className={`flex items-center h-[21px] mt-1 ml-1 pl-0.5 bg-[#eef5fc] text-[10px] text-[#111] ${ARIAL}`}>
              <Grip />
              <span className="w-0.5" />
              {sections.map((s) => (
                <span key={s.label} className="flex items-center">
                  <button
                    type="button"
                    className={`h-[18px] flex items-center gap-0.5 whitespace-nowrap bg-gradient-to-r from-[#e9f2fc] to-white border border-[#f7fafe] ${s.icon ? 'pl-px' : 'pl-1'} ${s.width}`}
                  >
                    {s.icon}
                    {s.label}
                  </button>
                  {!s.noSep && <span className="w-px h-[15px] mx-[3px] bg-[#b7c3d3]" />}
                </span>
              ))}
              <span className="flex-1" />
              <button type="button" aria-label="More sections" className="self-end pb-px pr-px"><OverflowIcon /></button>
            </nav>
            <div className="flex-1 flex">
              <div className="w-[271px] shrink-0 flex flex-col pl-0.5">
                <div className="flex items-center h-[22px] mt-0.5 mb-[3px] ml-0.5 pl-0.5 bg-[#eef5fc]">
                  <Grip />
                  <div className="flex items-center h-full gap-[10px] pl-[5px] pr-2.5 bg-[#f1f1f1] ml-0.5">
                    <button type="button" aria-label="Add">
                      <Icon className="w-2.5 h-2.5"><path d="M1 1h14v14H1z" fill="#1c4cc0" stroke="#0d2c7c" /><path d="M8 4v8M4 8h8" stroke="#fff" strokeWidth="2" /></Icon>
                    </button>
                    <button type="button" aria-label="Delete">
                      <Icon className="w-3 h-3"><path d="M2 2l12 12M14 2L2 14" stroke="#333" strokeWidth="1.800" /></Icon>
                    </button>
                    <button type="button" aria-label="Rename">
                      <Icon className="w-3 h-3">
                        <path d="M1 2h3l4 6-4 6H1z" fill="#f2e13c" stroke="#3d3a10" />
                        <path d="M8 2h3l4.500 6-4.500 6H8z" fill="#d8262c" stroke="#5c1010" />
                        <path d="M3.500 4v8M5.500 5v6M10 5v6M10 8h2.500" stroke="#111" />
                      </Icon>
                    </button>
                    <button type="button" aria-label="Expand all">
                      <Icon className="w-3 h-3"><path d="M.7.700h14.600v14.600H.7z" fill="#fbfcff" stroke="#98a4cf" strokeWidth="1.300" /><path d="M4.500 4L8 7l3.500-3M4.500 9L8 12l3.500-3" stroke="#22338c" strokeWidth="1.600" /></Icon>
                    </button>
                    <button type="button" aria-label="Collapse all">
                      <Icon className="w-3 h-3"><path d="M.7.700h14.600v14.600H.7z" fill="#fbfcff" stroke="#98a4cf" strokeWidth="1.300" /><path d="M4.500 7L8 4l3.500 3M4.500 12L8 9l3.500 3" stroke="#22338c" strokeWidth="1.600" /></Icon>
                    </button>
                  </div>
                  <span className="flex-1" />
                  <button type="button" aria-label="More actions" className="self-end pb-px pr-0.5"><OverflowIcon /></button>
                </div>
                <Tree />
              </div>
              <div className="w-px bg-[#d7e2ee]" />
              <Editor />
            </div>
          </div>
          <div className={`h-[21px] flex border-t border-b border-[#8a8a8a] text-[10px] text-black ${ARIAL}`}>
            <button type="button" className="w-12 pr-0.5 border-r border-[#a0a0a0]">Designer</button>
            <button type="button" className="w-[54px] pl-1 text-left">DataModel</button>
            <button type="button" className="relative w-[59px] h-[23px] -mt-[3px] pt-1 bg-white border-[3px] border-[#ed1c24] flex items-center justify-center">Controller</button>
            <button type="button" className="w-10 border-r border-[#a0a0a0]">Preview</button>
          </div>
        </main>
        <div className="w-1 shrink-0" />
        <PropertiesPane />
      </div>
    </div>
  )
}
